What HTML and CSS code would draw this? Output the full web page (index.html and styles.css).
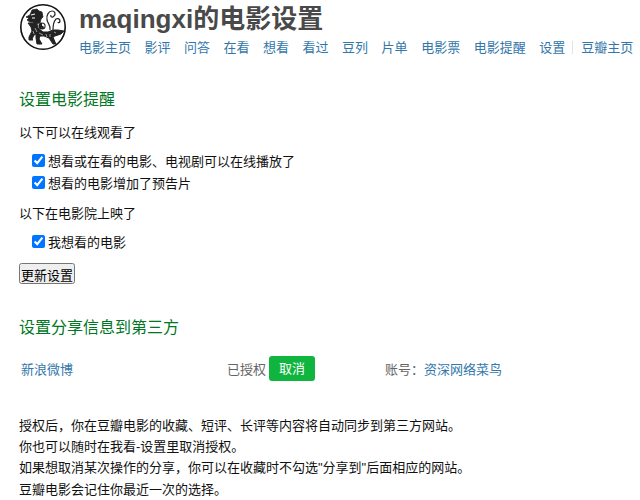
FILE: index.html
```html
<!DOCTYPE html>
<html lang="zh-CN">
<head>
    <meta charset="UTF-8">
    <title>maqingxi的电影设置</title>
    <link rel="stylesheet" href="styles.css">
</head>
<body>
    <div class="header">
        <svg class="logo" width="48" height="48" viewBox="0 0 48 48">
            <circle cx="24" cy="24" r="22.2" fill="#fff" stroke="#111" stroke-width="1.6"/>
            <!-- head -->
            <path d="M7 14l4-2 2-5 5-1 2 2 3 1 1 5-2 2-1 4-5 1-2-2-3 0-3-2 2-2z" fill="#222" stroke="#222" stroke-width=".8"/>
            <path d="M12 12l4-1M13 15l3 0" stroke="#fff" stroke-width="1" fill="none"/>
            <!-- body and legs -->
            <path d="M9 20l5 0 4 1 1 4 5 4 5 0 5-2 5 0 6 1-3 3-6 2-2 1 2 5 1 2-3 0-4-6-5-2-4 0-1 3 3 5-5 0-1-6 0-4-2 1-2 4 1 1-4 0 0-3 3-6-1-4z" fill="#222" stroke="#222" stroke-width="1"/>
            <path d="M20 30l4 2M16 25l2 4M27 31l1 3M31 31l0 3M35 29l2 1M14 28l1 3" stroke="#bbb" stroke-width=".8" fill="none"/>
            <!-- yin yang -->
            <circle cx="23" cy="23" r="3.6" fill="#222"/>
            <path d="M23 20.4a2.6 2.6 0 0 1 1 5a1.3 1.3 0 0 0 -1 -2.4z" fill="#fff"/>
            <!-- tail curls -->
            <path d="M31 27c1-4-2-6-3-10-1-5 2-9 5-9s4 3 2 5c-1 2-4 1-3-1" fill="none" stroke="#222" stroke-width="1.2"/>
            <path d="M34 27c0-4 0-8 3-11 2-1 4 0 4 2s-2 2-2 1" fill="none" stroke="#222" stroke-width="1.2"/>
        </svg>
        <div class="header-text">
            <h1 class="title">maqingxi的电影设置</h1>
            <div class="nav">
                <a href="#">电影主页</a>
                <a href="#">影评</a>
                <a href="#">问答</a>
                <a href="#">在看</a>
                <a href="#">想看</a>
                <a href="#">看过</a>
                <a href="#">豆列</a>
                <a href="#">片单</a>
                <a href="#">电影票</a>
                <a href="#">电影提醒</a>
                <a href="#">设置</a>
                <span class="sep"></span>
                <a href="#">豆瓣主页</a>
            </div>
        </div>
    </div>

    <div class="content">
        <h2 class="section-title first">设置电影提醒</h2>
        <form>
            <p class="group-label">以下可以在线观看了</p>
            <label class="check"><input type="checkbox" checked>想看或在看的电影、电视剧可以在线播放了</label>
            <label class="check"><input type="checkbox" checked>想看的电影增加了预告片</label>
            <p class="group-label second">以下在电影院上映了</p>
            <label class="check"><input type="checkbox" checked>我想看的电影</label>
            <button type="button" class="submit">更新设置</button>
        </form>

        <h2 class="section-title">设置分享信息到第三方</h2>
        <div class="share-row">
            <a href="#" class="share-name">新浪微博</a>
            <span class="share-status">已授权</span>
            <a href="#" class="cancel">取消</a>
            <span class="share-account">账号：<a href="#">资深网络菜鸟</a></span>
        </div>
        <div class="note">
            <p>授权后，你在豆瓣电影的收藏、短评、长评等内容将自动同步到第三方网站。</p>
            <p>你也可以随时在我看-设置里取消授权。</p>
            <p>如果想取消某次操作的分享，你可以在收藏时不勾选"分享到"后面相应的网站。</p>
            <p>豆瓣电影会记住你最近一次的选择。</p>
        </div>
    </div>
</body>
</html>
```

FILE: styles.css
```css
body {
    margin: 0;
    font-family: "Liberation Sans", "Noto Sans CJK SC", sans-serif;
    font-size: 13px;
    color: #111;
    background: #fff;
}

a {
    color: #37a;
    text-decoration: none;
}

.header {
    display: flex;
    gap: 12px;
    padding: 3px 0 0 19px;
}

.logo {
    flex: none;
}

.title {
    margin: 0;
    font-size: 26px;
    line-height: 32px;
    font-weight: bold;
    color: #494949;
}

.nav {
    display: flex;
    align-items: center;
    gap: 13.5px;
    margin-top: 3px;
    line-height: 19px;
    white-space: nowrap;
}

.sep {
    width: 1px;
    height: 13px;
    background: #e4e4e4;
    margin: 0 -5px 0 -7px;
}

.content {
    padding: 0 0 0 19px;
}

.section-title {
    margin: 32px 0 0;
    font-size: 16px;
    line-height: 24px;
    font-weight: normal;
    color: #072;
}

.section-title.first {
    margin-top: 31px;
}

.group-label {
    margin: 11px 0 6px;
    line-height: 20px;
}

.group-label.second {
    margin: 11px 0 6px;
}

.check {
    display: flex;
    align-items: center;
    height: 22px;
    padding-left: 10px;
}

.check input {
    width: 13px;
    height: 13px;
    margin: 0 3px;
}

.submit {
    display: block;
    margin-top: 11px;
    width: 56px;
    height: 21px;
    padding: 0;
    font: inherit;
}

.share-row {
    display: flex;
    align-items: center;
    height: 26px;
    margin-top: 15px;
    padding-left: 2px;
}

.share-name {
    width: 206px;
}

.share-status {
    color: #666;
    width: 42px;
}

.cancel {
    width: 46px;
    height: 25px;
    line-height: 25px;
    text-align: center;
    border-radius: 3px;
    background: #0fb53f;
    color: #fff;
}

.share-account {
    margin-left: 70px;
    color: #666;
}

.note {
    margin-top: 34px;
}

.note p {
    margin: 0;
    line-height: 21.2px;
}
```
